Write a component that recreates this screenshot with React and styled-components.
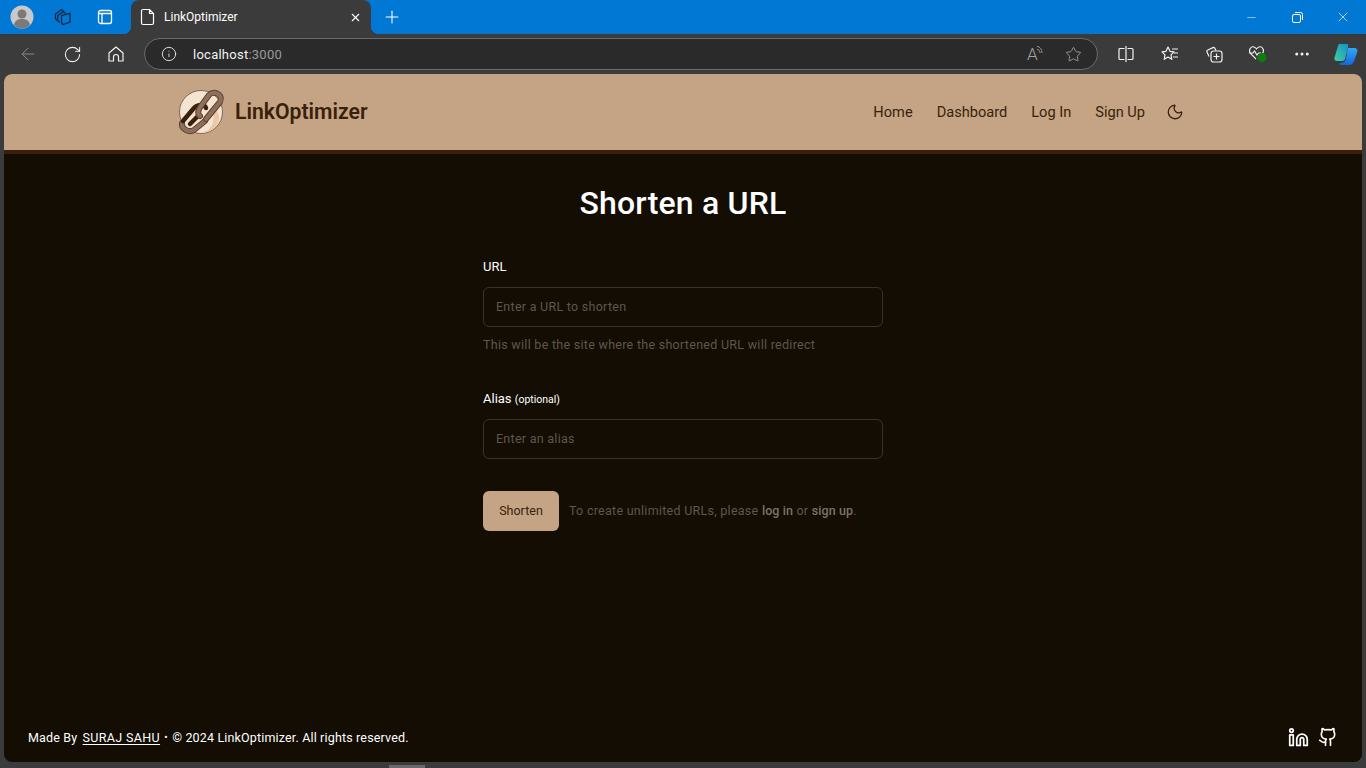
import React from 'react'
import styled, { createGlobalStyle } from 'styled-components'
import { ArrowLeft, RotateCw, Info, Star, X, Minus, Plus, Moon, Linkedin, Github, MoreHorizontal } from 'lucide-react'

const GlobalStyle = createGlobalStyle`
  * { box-sizing: border-box; }
  html, body { margin: 0; padding: 0; height: 100%; background: #3b3b3b; overflow: hidden; }
  body { font-family: Roboto, "Liberation Sans", sans-serif; }
`

const Browser = styled.div`
  height: 768px;
  display: flex;
  flex-direction: column;
`

const TabStrip = styled.div`
  height: 34px;
  flex: none;
  background: #0078d4;
  display: flex;
  align-items: flex-end;
  padding-left: 8px;
`

const Avatar = styled.div`
  width: 28px;
  height: 34px;
  display: flex;
  align-items: center;
  justify-content: center;
  margin-right: 10px;
`

const StripIcon = styled.div`
  width: 34px;
  height: 34px;
  display: flex;
  align-items: center;
  justify-content: center;
  margin-right: 8px;
  color: ${p => p.$color || '#0b2338'};
`

const Tab = styled.div`
  position: relative;
  width: 240px;
  height: 34px;
  margin-left: 1px;
  background: #3b3b3b;
  border-radius: 8px 8px 0 0;
  display: flex;
  align-items: center;
  padding: 0 9px;
  color: #fff;
  font-size: 12px;
  gap: 8px;
  span { flex: 1; }
  &::before, &::after {
    content: '';
    position: absolute;
    bottom: 0;
    width: 8px;
    height: 8px;
  }
  &::before {
    left: -8px;
    background: radial-gradient(circle at 0 0, transparent 8px, #3b3b3b 8.5px);
  }
  &::after {
    right: -8px;
    background: radial-gradient(circle at 100% 0, transparent 8px, #3b3b3b 8.5px);
  }
`

const NewTab = styled.div`
  width: 42px;
  height: 34px;
  display: flex;
  align-items: center;
  justify-content: center;
  color: #fff;
`

const WindowButtons = styled.div`
  margin-left: auto;
  height: 34px;
  display: flex;
  color: #fff;
`

const WindowButton = styled.div`
  width: 46px;
  height: 34px;
  display: flex;
  align-items: center;
  justify-content: center;
`

const Toolbar = styled.div`
  height: 40px;
  flex: none;
  background: #3b3b3b;
  display: flex;
  align-items: center;
  padding-left: 6px;
  color: #f2f2f2;
`

const ToolButton = styled.div`
  width: 44px;
  height: 36px;
  flex: none;
  display: flex;
  align-items: center;
  justify-content: center;
  color: ${p => (p.$dim ? '#8a8a8a' : '#f2f2f2')};
`

const AddressBar = styled.div`
  width: 954px;
  height: 32px;
  flex: none;
  margin: 0 6px 0 6px;
  background: #2a2a2a;
  border: 1px solid #6b6b6b;
  border-radius: 16px;
  display: flex;
  align-items: center;
  padding: 0 15px 0 16px;
  font-size: 13px;
  letter-spacing: 0.25px;
`

const Host = styled.span`
  margin-left: 16px;
  color: #f2f2f2;
  em { font-style: normal; color: #9a9a9a; }
`

const AddressTools = styled.div`
  margin-left: auto;
  display: flex;
  align-items: center;
  gap: 22px;
  color: #a5a5a5;
`

const ReadAloud = styled.div`
  display: flex;
  align-items: center;
  width: 16px;
  font-size: 17px;
  font-weight: 300;
  svg { margin: -7px 0 0 -1px; flex: none; }
`

const Viewport = styled.div`
  height: 688px;
  flex: none;
  margin: 0 4px;
  border-radius: 8px;
  overflow: hidden;
  display: flex;
  flex-direction: column;
  background: #130d04;
`

const Header = styled.header`
  height: 80px;
  flex: none;
  background: #c4a484;
  border-bottom: 4px solid #3a1f0a;
  display: flex;
  justify-content: center;
`

const HeaderInner = styled.div`
  width: 1005px;
  margin-left: -3px;
  display: flex;
  align-items: center;
  justify-content: space-between;
`

const Brand = styled.div`
  display: flex;
  align-items: center;
  gap: 10px;
  font-size: 21.2px;
  font-weight: 600;
  line-height: 44px;
  color: #3a1f0a;
`

const Nav = styled.nav`
  display: flex;
  align-items: center;
  gap: 24px;
  font-size: 14.6px;
  color: #3a1f0a;
`

const Main = styled.main`
  flex: 1;
  display: flex;
  flex-direction: column;
  align-items: center;
  padding-top: 28px;
`

const Title = styled.h1`
  margin: 0 0 35px;
  font-size: 32px;
  line-height: 42px;
  font-weight: 500;
  letter-spacing: 0.2px;
  color: #fff;
`

const Form = styled.form`
  width: 400px;
`

const Field = styled.div`
  margin-bottom: 32px;
`

const Label = styled.label`
  display: block;
  height: 16px;
  font-size: 13px;
  line-height: 16px;
  margin-bottom: 12px;
  color: #fff;
  small { font-size: 10.5px; line-height: 0; }
`

const Input = styled.input`
  display: block;
  width: 100%;
  height: 40px;
  padding: 0 12px 2px;
  background: #130d04;
  border: 1px solid #3b3226;
  border-radius: 6px;
  font: 400 12.5px Roboto, sans-serif;
  letter-spacing: 0.27px;
  color: #fff;
  &::placeholder { color: #5f574c; opacity: 1; }
`

const Hint = styled.p`
  margin: 10px 0 38px;
  font-size: 12.5px;
  line-height: 16px;
  letter-spacing: 0.28px;
  color: #5f574c;
`

const Actions = styled.div`
  display: flex;
  align-items: center;
  gap: 10px;
  font-size: 12.5px;
  letter-spacing: 0.27px;
  color: #5f574c;
  span { margin-top: -2px; }
  b { font-weight: 500; color: #7a7268; letter-spacing: 0.1px; }
`

const Submit = styled.button`
  width: 76px;
  height: 40px;
  padding: 0 0 2px;
  border: none;
  border-radius: 6px;
  background: #c4a484;
  color: #3a1f0a;
  font: 400 12.5px Roboto, sans-serif;
`

const Footer = styled.footer`
  height: 50px;
  flex: none;
  display: flex;
  align-items: center;
  justify-content: space-between;
  padding: 0 24px;
  font-size: 12.5px;
  letter-spacing: 0.16px;
  color: #fff;
  u { margin-left: 2px; text-underline-offset: 2px; letter-spacing: 0.35px; }
  i { font-style: normal; font-size: 10px; margin: 0 1px; vertical-align: 1px; }
`

const Socials = styled.div`
  display: flex;
  align-items: center;
  gap: 9px;
`

const BottomEdge = styled.div`
  flex: 1;
  background: #3b3b3b;
  display: flex;
  align-items: flex-end;
  padding-left: 389px;
`

const Grip = styled.div`
  width: 36px;
  height: 3px;
  background: #6a6a6a;
`

const Logo = () => (
  <svg width="46" height="46" viewBox="0 0 46 46" fill="none">
    <circle cx="22" cy="23" r="21.5" fill="#f5e4d2" stroke="#6b5444" strokeWidth="0.8" />
    <path d="M32 16c8 6 10 13 6 20-4 5-10 8-16 8 13-3 15-14 10-28z" fill="#e9c9a6" />
    <g strokeLinecap="round" strokeLinejoin="round" fill="none">
      <path d="M3 34C2 40 10 44 15 41L26 32" stroke="#5a4335" strokeWidth="6" />
      <path d="M3 34C2 40 10 44 15 41L26 32" stroke="#8e6f5a" strokeWidth="4" />
      <path d="M4 32L15 19C19 15 26 15 27 19" stroke="#3a1f0a" strokeWidth="4.5" />
      <path d="M11 35L19 27" stroke="#3a1f0a" strokeWidth="4.5" />
      <path d="M21 27C18 25 19 21 22 17L30 6C34 1 45 5 41 13L27 30" stroke="#5a4335" strokeWidth="6" />
      <path d="M21 27C18 25 19 21 22 17L30 6C34 1 45 5 41 13L27 30" stroke="#8e6f5a" strokeWidth="4" />
    </g>
  </svg>
)

const Copilot = () => (
  <svg width="26" height="24" viewBox="0 0 26 24">
    <defs>
      <linearGradient id="cpa" x1="0" y1="1" x2="1" y2="0">
        <stop offset="0" stopColor="#3fd0a0" />
        <stop offset="1" stopColor="#1590c8" />
      </linearGradient>
      <linearGradient id="cpb" x1="0" y1="0" x2="0" y2="1">
        <stop offset="0" stopColor="#36a6f5" />
        <stop offset="1" stopColor="#1068dc" />
      </linearGradient>
    </defs>
    <path d="M7 2h7c2 0 1 2 1 4l-3 11c-1 2-2 2-4 2H4c-3 0-3-3-2-5L5 4c.4-1.400 1-2 2-2z" fill="url(#cpa)" />
    <path d="M15 6h6c3 0 4 2 3 5l-3 8c-1 3-3 4-5 4H9c-2 0-3-1-2-2 3 0 5-1 6-4z" fill="url(#cpb)" />
  </svg>
)

export default function App() {
  return (
    <Browser>
      <GlobalStyle />
      <TabStrip>
        <Avatar>
          <svg width="24" height="24" viewBox="0 0 24 24">
            <circle cx="12" cy="12" r="11.500" fill="#c9c9c9" />
            <circle cx="12" cy="9" r="4.500" fill="#7a7a7a" />
            <path d="M4 20c1-5 4-6 8-6s7 1 8 6c-4 4.500-12 4.500-16 0z" fill="#7a7a7a" />
          </svg>
        </Avatar>
        <StripIcon>
          <svg width="18" height="18" viewBox="0 0 18 18" fill="none" stroke="currentColor" strokeWidth="1.200">
            <path d="M3 12.500L1.500 10.500V6L7.500 1.500l2 2" />
            <path d="M5.500 14.500L3.800 12.500V7.500L9.500 3.500l2 2" />
            <path d="M7.500 7.500l8.500-2.200v8.700l-7 2.500-1.500-1.500z" />
          </svg>
        </StripIcon>
        <StripIcon $color="#fff">
          <svg width="16" height="16" viewBox="0 0 16 16" fill="none" stroke="currentColor" strokeWidth="1.300">
            <rect x="1.500" y="1.500" width="13" height="13" rx="2" />
            <path d="M1.500 4.500h13M5 4.500v10" />
          </svg>
        </StripIcon>
        <Tab>
          <svg width="16" height="18" viewBox="0 0 16 18" fill="none" stroke="#fff" strokeWidth="1.200">
            <path d="M3 1.500h6.500l4 4V15a1.500 1.500 0 0 1-1.500 1.500H3A1.500 1.500 0 0 1 1.500 15V3A1.500 1.500 0 0 1 3 1.500zM9.500 1.500v4h4" />
          </svg>
          <span>LinkOptimizer</span>
          <X size={13} />
        </Tab>
        <NewTab><Plus size={20} strokeWidth={1.300} /></NewTab>
        <WindowButtons>
          <WindowButton><Minus size={13} strokeWidth={1} /></WindowButton>
          <WindowButton>
            <svg width="11" height="11" viewBox="0 0 11 11" fill="none" stroke="currentColor">
              <rect x="0.500" y="2.500" width="8" height="8" rx="1.500" />
              <path d="M3 .5h5.500a2 2 0 0 1 2 2V8" />
            </svg>
          </WindowButton>
          <WindowButton><X size={16} strokeWidth={1} /></WindowButton>
        </WindowButtons>
      </TabStrip>
      <Toolbar>
        <ToolButton $dim><ArrowLeft size={20} strokeWidth={1.200} /></ToolButton>
        <ToolButton><RotateCw size={19} strokeWidth={1.300} /></ToolButton>
        <ToolButton>
          <svg width="16" height="16" viewBox="0 0 16 16" fill="none" stroke="currentColor" strokeWidth="1.200">
            <path d="M1 7l7-6 7 6v8h-4.500v-4a2 2 0 0 0-5 0v4H1z" strokeLinejoin="round" />
          </svg>
        </ToolButton>
        <AddressBar>
          <Info size={16} strokeWidth={1.300} />
          <Host>localhost<em>:3000</em></Host>
          <AddressTools>
            <ReadAloud>
              A
              <svg width="6" height="10" viewBox="0 0 6 10" fill="none" stroke="currentColor" strokeWidth="0.900"><path d="M0 3.500c2 0 3 1.500 3 3.500M0 .5c3 0 5 3 5 6.500" /></svg>
            </ReadAloud>
            <Star size={17} strokeWidth={1.200} />
          </AddressTools>
        </AddressBar>
        <ToolButton>
          <svg width="16" height="16" viewBox="0 0 16 16" fill="none" stroke="currentColor" strokeWidth="1.200">
            <path d="M6.500 2.500H2a1 1 0 0 0-1 1v9a1 1 0 0 0 1 1h4.500M9.500 2.500H14a1 1 0 0 1 1 1v9a1 1 0 0 1-1 1H9.500M8 0v16" />
          </svg>
        </ToolButton>
        <ToolButton>
          <svg width="18" height="16" viewBox="0 0 18 16" fill="none" stroke="currentColor" strokeWidth="1.200">
            <path d="M7 1l2 4.300 4 .5-3 3 .8 4.500L7 11l-3.800 2.300.8-4.500-3-3 4-.5zM11 3h6M13 7h4M12 11h5" strokeLinejoin="round" />
          </svg>
        </ToolButton>
        <ToolButton>
          <svg width="18" height="18" viewBox="0 0 18 18" fill="none" stroke="currentColor" strokeWidth="1.200">
            <path d="M4 11.500L2 7a1.500 1.500 0 0 1 .8-2L8 2.600a1.500 1.500 0 0 1 2 .8l1 2" />
            <rect x="6" y="6" width="11" height="11" rx="2.500" />
            <path d="M11.500 8.500v6M8.500 11.500h6" />
          </svg>
        </ToolButton>
        <ToolButton>
          <svg width="20" height="18" viewBox="0 0 20 18">
            <path d="M8 14L2.500 8.500C0 5 3 1 6 2c1 .3 1.700 1 2.500 2 .8-1 1.500-1.700 2.500-2 3-1 6 3 3.500 6.500M1 8h4l1.500-2L9 10l1.500-2H13" fill="none" stroke="#f2f2f2" strokeWidth="1.100" />
            <circle cx="14" cy="12.500" r="4.500" fill="#107c10" />
          </svg>
        </ToolButton>
        <ToolButton><MoreHorizontal size={18} /></ToolButton>
        <ToolButton><Copilot /></ToolButton>
      </Toolbar>
      <Viewport>
        <Header>
          <HeaderInner>
            <Brand><Logo />LinkOptimizer</Brand>
            <Nav>
              <span>Home</span>
              <span>Dashboard</span>
              <span>Log In</span>
              <span>Sign Up</span>
              <Moon size={18} strokeWidth={1.700} style={{ marginLeft: -3 }} />
            </Nav>
          </HeaderInner>
        </Header>
        <Main>
          <Title>Shorten a URL</Title>
          <Form>
            <div>
              <Label>URL</Label>
              <Input placeholder="Enter a URL to shorten" />
              <Hint>This will be the site where the shortened URL will redirect</Hint>
            </div>
            <Field>
              <Label>Alias <small>(optional)</small></Label>
              <Input placeholder="Enter an alias" />
            </Field>
            <Actions>
              <Submit type="button">Shorten</Submit>
              <span>To create unlimited URLs, please <b>log in</b> or <b>sign up</b>.</span>
            </Actions>
          </Form>
        </Main>
        <Footer>
          <span>Made By <u>SURAJ SAHU</u> <i>•</i> © 2024 LinkOptimizer. All rights reserved.</span>
          <Socials>
            <Linkedin size={21} strokeWidth={2} />
            <Github size={20} strokeWidth={2} />
          </Socials>
        </Footer>
      </Viewport>
      <BottomEdge><Grip /></BottomEdge>
    </Browser>
  )
}
